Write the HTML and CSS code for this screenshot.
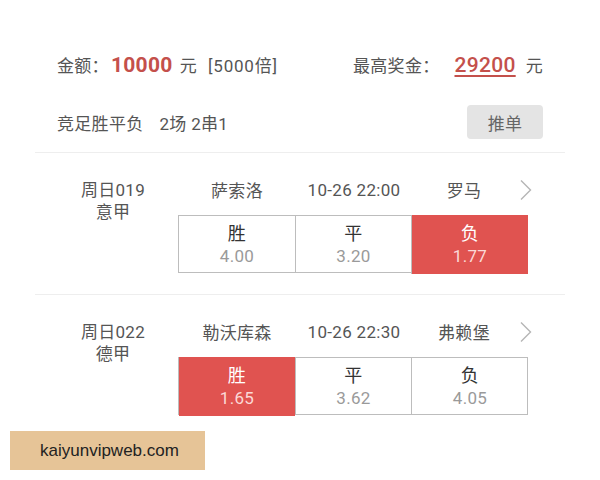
FILE: index.html
```html
<!DOCTYPE html>
<html lang="zh">
<head>
<meta charset="utf-8">
<link rel="stylesheet" href="styles.css">
</head>
<body>
<div class="page">
  <div class="summary">
    <div class="row1">
      <div class="amount"><span class="lbl">金额：</span><span class="num">10000</span><span class="unit">元</span><span class="mult">[5000倍]</span></div>
      <div class="prize"><span class="lbl">最高奖金：</span><span class="num link">29200</span><span class="unit">元</span></div>
    </div>
    <div class="row2">
      <div class="type">竞足胜平负<span class="sp"></span>2场 2串1</div>
      <div class="btn">推单</div>
    </div>
  </div>
  <div class="match">
    <div class="info"><div>周日019</div><div>意甲</div></div>
    <div class="main">
      <div class="teams"><span>萨索洛</span><span>10-26 22:00</span><span>罗马</span><span class="chev"><svg width="14" height="22" viewBox="0 0 14 22"><path d="M2 1.5 L11.5 11 L2 20.5" fill="none" stroke="#b5b5b5" stroke-width="1.4"/></svg></span></div>
      <div class="odds">
        <div class="cell"><div class="k">胜</div><div class="v">4.00</div></div>
        <div class="cell"><div class="k">平</div><div class="v">3.20</div></div>
        <div class="cell on"><div class="k">负</div><div class="v">1.77</div></div>
      </div>
    </div>
  </div>
  <div class="match">
    <div class="info"><div>周日022</div><div>德甲</div></div>
    <div class="main">
      <div class="teams"><span>勒沃库森</span><span>10-26 22:30</span><span>弗赖堡</span><span class="chev"><svg width="14" height="22" viewBox="0 0 14 22"><path d="M2 1.5 L11.5 11 L2 20.5" fill="none" stroke="#b5b5b5" stroke-width="1.4"/></svg></span></div>
      <div class="odds">
        <div class="cell on"><div class="k">胜</div><div class="v">1.65</div></div>
        <div class="cell"><div class="k">平</div><div class="v">3.62</div></div>
        <div class="cell"><div class="k">负</div><div class="v">4.05</div></div>
      </div>
    </div>
  </div>
</div>
<div class="watermark">kaiyunvipweb.com</div>
</body>
</html>
```
FILE: styles.css
```css
html, body {
  margin: 0;
  padding: 0;
  background: #fff;
}
body {
  width: 600px;
  height: 480px;
  overflow: hidden;
  position: relative;
  font-family: Roboto, "Noto Sans CJK SC", sans-serif;
  color: #555;
  letter-spacing: 0.3px;
}
.summary {
  padding: 50px 57px 0 57px;
}
.row1 {
  display: flex;
  justify-content: space-between;
  align-items: center;
  height: 28px;
  font-size: 17px;
}
.row1 .num {
  color: #c4504b;
  font-size: 21px;
  font-weight: 700;
  margin-left: 2px;
}
.row1 .unit {
  margin-left: 7px;
}
.row1 .mult {
  margin-left: 11px;
  letter-spacing: 0.8px;
}
.prize .lbl {
  margin-right: 13px;
}
.prize .num.link {
  font-weight: 500;
  text-decoration: underline;
  text-underline-offset: 3px;
  text-decoration-thickness: 2px;
}
.prize .unit {
  margin-left: 10px;
}
.row2 {
  display: flex;
  justify-content: space-between;
  align-items: center;
  margin-top: 27px;
  height: 34px;
  font-size: 17px;
}
.type .sp {
  display: inline-block;
  width: 16px;
}
.btn {
  width: 76px;
  height: 34px;
  border-radius: 4px;
  background: #e4e4e4;
  color: #666;
  display: flex;
  align-items: center;
  justify-content: center;
  font-size: 17px;
}
.match {
  margin: 0 35px;
  border-top: 1px solid #eeeeee;
  display: flex;
  padding: 24px 0 21px 0;
}
.summary + .match {
  margin-top: 13px;
}
.info {
  width: 130px;
  padding-left: 13px;
  text-align: center;
  font-size: 17px;
  line-height: 22px;
  padding-top: 2px;
}
.main {
  width: 350px;
}
.teams {
  display: grid;
  grid-template-columns: 118px 116px 104px 20px;
  align-items: center;
  height: 24px;
  font-size: 17px;
  text-align: center;
}
.chev {
  display: flex;
  justify-content: center;
  align-items: center;
}
.odds {
  margin-top: 14px;
  display: grid;
  grid-template-columns: 116px 116px 117px;
  height: 58px;
  border: 1.5px solid #bdbdbd;
  box-sizing: border-box;
}
.cell {
  display: flex;
  flex-direction: column;
  align-items: center;
  justify-content: center;
  border-left: 1.5px solid #bdbdbd;
}
.cell:first-child {
  border-left: none;
}
.cell .k {
  font-size: 18px;
  line-height: 23px;
  color: #333;
}
.cell .v {
  font-size: 17px;
  line-height: 22px;
  color: #9a9a9a;
}
.cell.on {
  background: #e05350;
  margin: -1.5px 0;
}
.cell.on .k {
  color: #fff;
}
.cell.on .v {
  color: #fbd9d7;
}
.watermark {
  position: absolute;
  left: 10px;
  top: 431px;
  width: 195px;
  height: 39px;
  background: #e6c497;
  color: #222;
  font-family: "Liberation Sans", Arial, sans-serif;
  font-size: 17px;
  letter-spacing: 0;
  display: flex;
  align-items: center;
  padding-left: 30px;
  box-sizing: border-box;
}
```
